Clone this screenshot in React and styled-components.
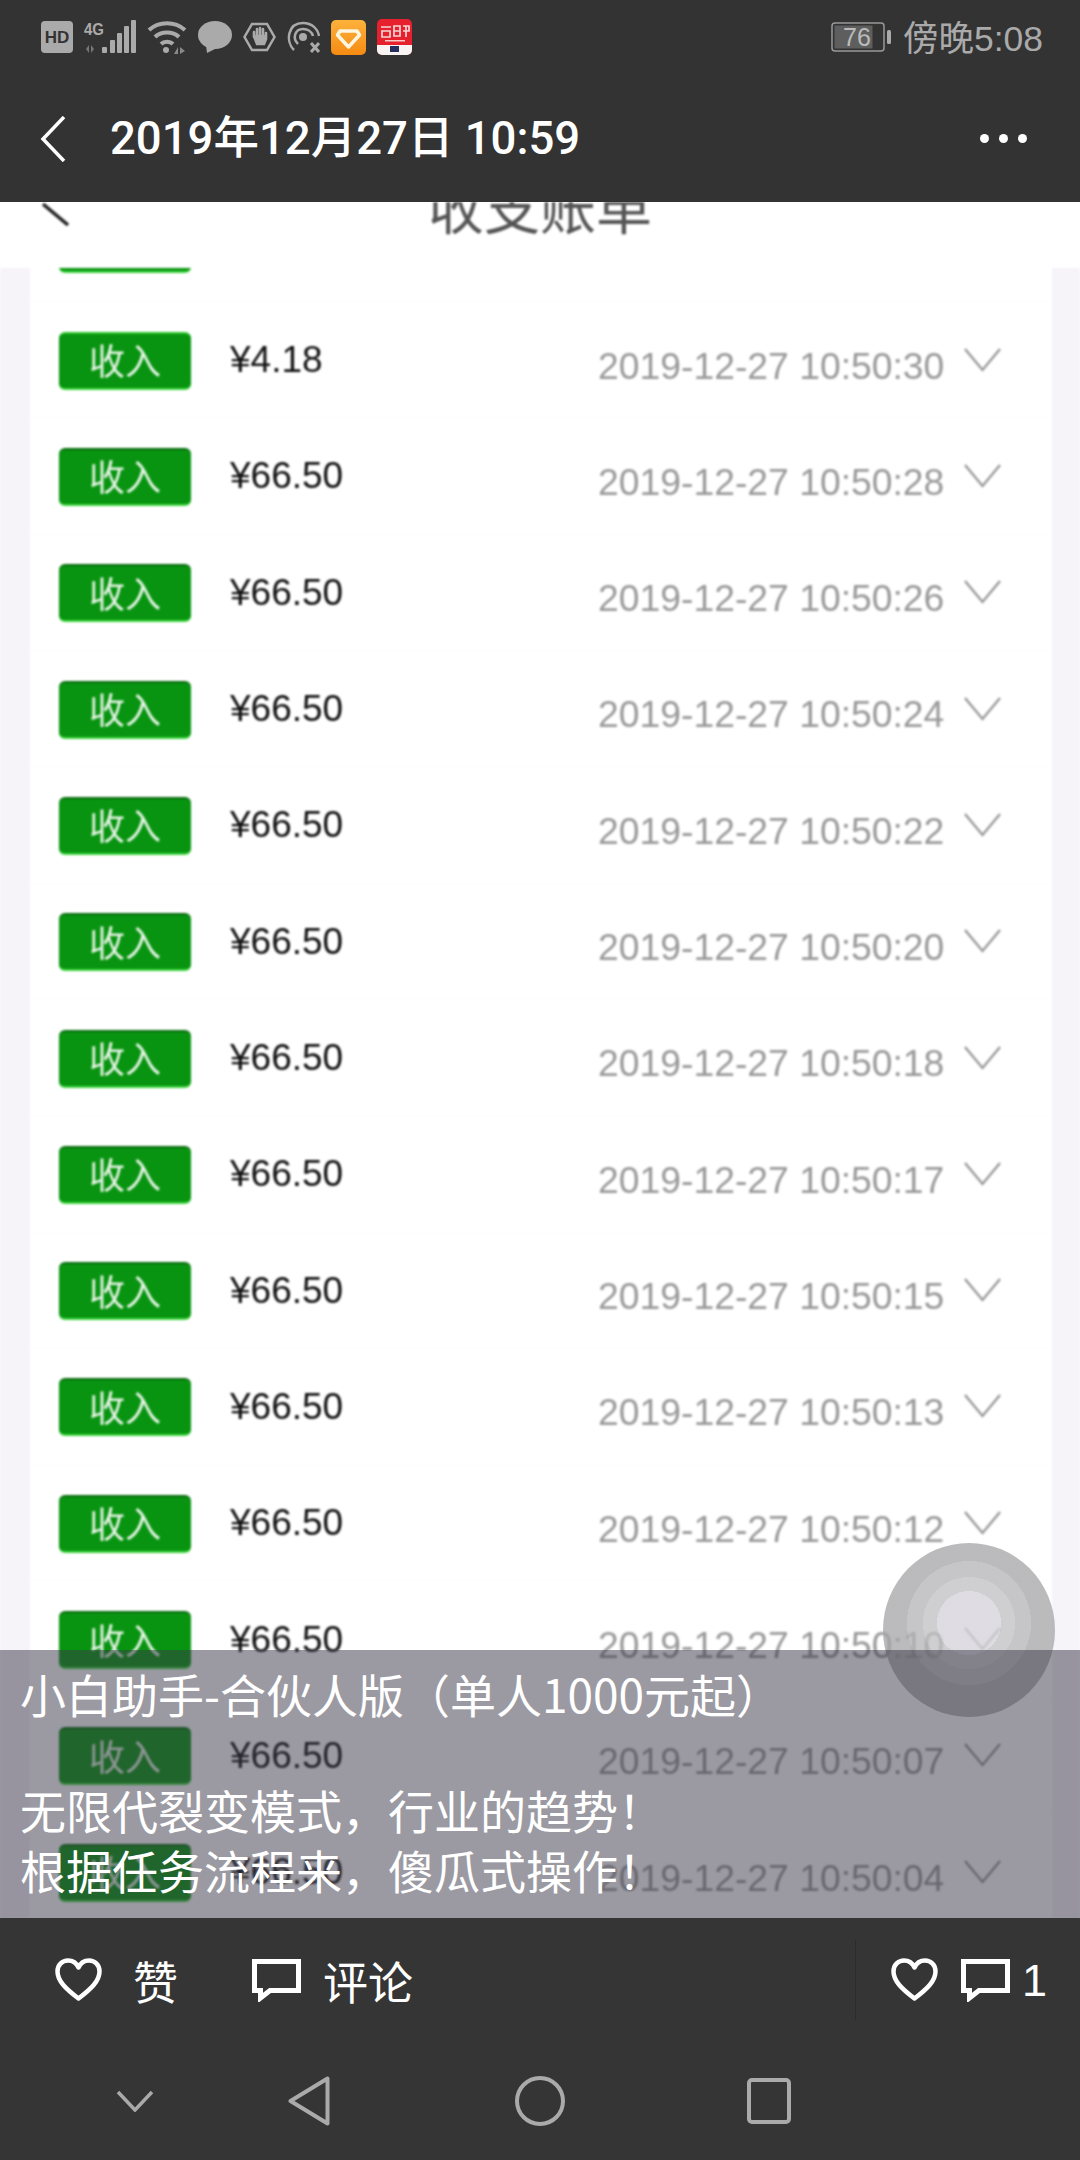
import React from "react";
import styled, { createGlobalStyle } from "styled-components";

const Global = createGlobalStyle`
  html, body { margin: 0; padding: 0; background: #333; }
  * { box-sizing: border-box; }
`;
const SANS = `"Liberation Sans", "Noto Sans CJK SC", sans-serif`;
const CJK = `"Noto Sans CJK SC", sans-serif`;

const Page = styled.div`
  width: 1080px; height: 2160px; display: flex; flex-direction: column;
  overflow: hidden; background: #333; font-family: ${SANS};
`;
const StatusBar = styled.div`
  height: 70px; display: flex; align-items: center; justify-content: space-between;
  padding: 4px 37px 0 41px; background: #333; color: #aaa;
`;
const StatusIcons = styled.div` display: flex; align-items: center; gap: 11px; `;
const StatusRight = styled.div` display: flex; align-items: center; gap: 10px; `;
const Clock = styled.span` font: 400 35.5px "Liberation Sans", ${CJK}; color: #aaa; margin-top: -4px; `;
const NavBar = styled.header`
  height: 132px; display: flex; align-items: center; padding: 5px 0 0 40px; background: #333;
`;
const NavTitle = styled.h1`
  margin: 0 0 0 44px; flex: 1; font: 500 45.500px/1 Roboto, ${CJK}; color: #fff;
`;
const Dots = styled.div` display: flex; gap: 10px; margin-right: 53px; `;
const Dot = styled.i` width: 9px; height: 9px; border-radius: 50%; background: #fff; `;

const Stage = styled.main`
  position: relative; flex: 1; overflow: hidden; background: #fff; display: flex; flex-direction: column;
`;
const Sheet = styled.div`
  flex: 1; display: flex; flex-direction: column; filter: blur(0.8px); min-height: 0;
`;
const PageHead = styled.div`
  height: 66px; flex: none; overflow: hidden; background: #fff; position: relative; z-index: 1;
  display: grid; grid-template-columns: 1fr auto 1fr; padding-left: 42px;
`;
const PageTitle = styled.div`
  margin-top: -25px; font: 400 56px/55px ${CJK}; color: #555; padding-right: 42px;
`;
const ListBack = styled.div`
  flex: 1; min-height: 0; background: #f6f3f9; padding: 0 28px 0 30px; overflow: hidden;
`;
const List = styled.div` background: #fff; margin-top: -82.3px; `;
const Row = styled.div`
  height: 116.32px; display: flex; align-items: center; padding: 0 32px 0 29px;
  border-bottom: 1px solid #fbfbfb;
`;
const Tag = styled.span`
  width: 132px; height: 58px; flex: none; display: flex; align-items: center; justify-content: center;
  margin-top: 2px; padding-bottom: 3px;
  background: #089410; border-radius: 6px; color: #e6f5e6;
  border-bottom: 2px solid #3ed63e; border-top: 2px solid ${p => (p.$first ? "#2fc52f" : "#0a6a10")};
  font: 400 36px/1 ${CJK};
`;
const Amount = styled.span` margin-left: 39px; width: 368px; font: 400 37px/1 ${SANS}; color: #111; `;
const Stamp = styled.span`
  margin-top: 13px; font: 400 37.300px/1 ${SANS}; color: #9a9a9a; white-space: nowrap; width: 366px; flex: none;
`;
const Ball = styled.div`
  position: absolute; left: 883px; top: 1341px; width: 172px; height: 174px; border-radius: 50%;
  background: radial-gradient(circle at 50% 46%, #d3d1d8 0 32px, #bfbfc2 32px 46px, #b3b3b5 46px 62px, #a4a4a6 62px);
  opacity: 0.75;
`;
const Overlay = styled.div`
  position: absolute; left: 0; right: 0; bottom: 0; height: 268px; padding: 13px 0 0 20px;
  background: rgba(55, 53, 70, 0.5); color: #fff; font: 400 46px/60px ${CJK};
`;
const AdLine = styled.div` margin-bottom: ${p => p.$gap || 0}px; white-space: nowrap; `;

const Bottom = styled.footer` height: 242px; flex: none; background: #353535; `;
const Actions = styled.div`
  height: 124px; display: flex; align-items: center; padding-left: 55px; color: #fff;
`;
const ActionLabel = styled.span`
  font: 400 45px/1 ${CJK}; color: #fff; margin-left: ${p => p.$ml || 0}px; margin-right: ${p => p.$mr || 0}px;
`;
const Divider = styled.span` width: 1px; height: 80px; background: #2b2b2b; margin-left: auto; margin-right: 35px; `;
const Count = styled.span` font: 400 45px/1 ${SANS}; color: #fff; margin: 0 33px 0 12px; `;
const IconGap = styled.span` width: ${p => p.$w}px; flex: none; `;
const SysNav = styled.nav`
  height: 118px; display: grid; grid-template-columns: 135px 174px 231px 229px;
`;
const SysSlot = styled.span` display: flex; align-items: center; justify-content: flex-end; width: 0; justify-self: end; `;
const Centered = styled.span` display: block; transform: translateX(50%); line-height: 0; margin-top: -1px; `;

const Heart = () => (
  <svg width="47" height="44" viewBox="0 0 47 44" fill="none" stroke="#fff" strokeWidth="4.5" strokeLinejoin="round">
    <path d="M23.5 40.5 C11 31 2.5 23 2.5 13.5 C2.5 6.5 7.5 2.5 13 2.5 C17.5 2.5 21.5 5 23.5 9.5 C25.5 5 29.5 2.5 34 2.5 C39.5 2.5 44.500 6.500 44.500 13.500 C44.500 23 36 31 23.500 40.500 Z" />
  </svg>
);
const Comment = () => (
  <svg width="49" height="43" viewBox="0 0 49 43" fill="none" stroke="#fff" strokeWidth="5" strokeLinejoin="miter">
    <path d="M2.500 2.500 H46.500 V31.500 H18 L8.500 39 V31.500 H2.500 Z" />
  </svg>
);
const Caret = () => (
  <svg width="37" height="24" viewBox="0 0 37 24" fill="none" stroke="#999" strokeWidth="2.400">
    <path d="M1 1 L18.500 22 L36 1" />
  </svg>
);

const Hd = () => (
  <svg width="32" height="32" viewBox="0 0 32 32">
    <rect width="32" height="32" rx="4" fill="#aaa" />
    <text x="16" y="22" textAnchor="middle" fontFamily="Liberation Sans" fontWeight="700" fontSize="17" fill="#333">HD</text>
  </svg>
);
const Signal = () => (
  <svg width="52" height="34" viewBox="0 0 52 34" fill="#aaa">
    <text x="0" y="14" fontFamily="Liberation Sans" fontWeight="700" fontSize="15" transform="scale(1 1.1)">4G</text>
    <path d="M2 29 l3-4 v8 z M7 25 l3 4 -3 4 z" fill="#777" />
    <rect x="18" y="27" width="5" height="6" rx="1" />
    <rect x="26" y="20" width="5" height="13" rx="1" />
    <rect x="33" y="13" width="5" height="20" rx="1" />
    <rect x="40" y="6" width="5" height="27" rx="1" />
    <rect x="47" y="0" width="5" height="33" rx="1" />
  </svg>
);
const Wifi = () => (
  <svg width="40" height="34" viewBox="0 0 40 34" fill="none" stroke="#aaa" strokeWidth="4">
    <path d="M2 10 C12 1 28 1 38 10" />
    <path d="M8 17 C14 11 26 11 32 17" />
    <path d="M14 24 C17 21 23 21 26 24" />
    <circle cx="19" cy="30" r="3" fill="#aaa" stroke="none" />
    <path d="M27 34 l4-7 v7 z M33 27 l5 4 -5 3 z" fill="#888" stroke="none" />
  </svg>
);
const Bubble = () => (
  <svg width="34" height="32" viewBox="0 0 34 32" fill="#aaa">
    <ellipse cx="17" cy="14" rx="17" ry="14" />
    <path d="M8 24 L9 32 L19 27 Z" />
  </svg>
);
const Hand = () => (
  <svg width="33" height="30" viewBox="0 0 33 30" fill="none" stroke="#aaa" strokeWidth="2.500">
    <path d="M9 2 H24 L31.500 15 L24 28 H9 L1.500 15 Z" />
    <path d="M11 15 V10 M14 15 V7 M17 15 V6 M20 15 V7 M23 17 V11 M11 14 L14 22 H21 L23 17" strokeWidth="2.600" strokeLinecap="round" />
    <path d="M12 13 H22 V20 L20 22 H14 Z" fill="#aaa" stroke="none" />
  </svg>
);
const Radar = () => (
  <svg width="33" height="32" viewBox="0 0 33 32" fill="none" stroke="#aaa" strokeWidth="2.500">
    <path d="M7 29 C-2 20 1 2 16 2 C25 2 31 8 32 15" />
    <path d="M11 23 C5 17 8 8 16 8 C21 8 25 11 26 15" />
    <circle cx="16" cy="16" r="4" fill="#aaa" stroke="none" />
    <path d="M24 22 L32 31 M32 22 L24 31" strokeWidth="3" />
  </svg>
);
const Gem = () => (
  <svg width="35" height="35" viewBox="0 0 35 35">
    <defs>
      <linearGradient id="gemfill" x1="0" y1="0" x2="0" y2="1">
        <stop offset="0" stopColor="#fdb23c" />
        <stop offset="1" stopColor="#f58a12" />
      </linearGradient>
    </defs>
    <rect width="35" height="35" rx="5" fill="url(#gemfill)" />
    <path d="M9 11 H26 L28.500 15 L17.500 27 L6.500 15 Z" fill="none" stroke="#fff5e0" strokeWidth="3.500" strokeLinejoin="round" />
  </svg>
);
const Pay = () => (
  <svg width="35" height="36" viewBox="0 0 35 36">
    <rect width="35" height="36" rx="5" fill="#e6202c" />
    <path d="M0 26 H35 V31 A5 5 0 0 1 30 36 H5 A5 5 0 0 1 0 31 Z" fill="#f8f4f4" />
    <rect x="13" y="27" width="9" height="6" fill="#26305e" />
    <path d="M4 8 H14 M5 12 H13 V18 H5 Z M17 7 H23 V17 H17 Z M17 12 H23 M26 7 H32 V12 H26 M29 7 V18" stroke="#f6d6d6" strokeWidth="1.700" fill="none" />
    <rect x="8" y="21" width="20" height="1.500" fill="#f6c8c8" />
  </svg>
);
const Battery = () => (
  <svg width="62" height="30" viewBox="0 0 62 30">
    <rect x="1" y="1" width="52" height="28" rx="3" fill="none" stroke="#999" strokeWidth="1.500" />
    <rect x="3.500" y="3.500" width="38" height="23" fill="#5e5e5e" />
    <rect x="56" y="8" width="4" height="14" rx="1.500" fill="#aaa" />
    <text x="26" y="24" textAnchor="middle" fontFamily="Liberation Sans" fontSize="25" fill="#bbb">76</text>
  </svg>
);
const BackArrow = () => (
  <svg width="26" height="46" viewBox="0 0 26 46" fill="none" stroke="#fff" strokeWidth="3.500">
    <path d="M24 1 L3 23 L24 45" />
  </svg>
);
const PageBack = () => (
  <svg width="30" height="24" viewBox="0 0 30 24" fill="none" stroke="#222" strokeWidth="3.500">
    <path d="M1 2 L26 23" />
  </svg>
);

const rows = [
  ["¥66.50", "10:50:32"], ["¥4.18", "10:50:30"], ["¥66.50", "10:50:28"], ["¥66.50", "10:50:26"],
  ["¥66.50", "10:50:24"], ["¥66.50", "10:50:22"], ["¥66.50", "10:50:20"], ["¥66.50", "10:50:18"],
  ["¥66.50", "10:50:17"], ["¥66.50", "10:50:15"], ["¥66.50", "10:50:13"], ["¥66.50", "10:50:12"],
  ["¥66.50", "10:50:10"], ["¥66.50", "10:50:07"], ["¥66.50", "10:50:04"],
];

export default function App() {
  return (
    <Page>
      <Global />
      <StatusBar>
        <StatusIcons>
          <Hd /><Signal /><Wifi /><Bubble /><Hand /><Radar /><Gem /><Pay />
        </StatusIcons>
        <StatusRight>
          <Battery />
          <Clock>傍晚5:08</Clock>
        </StatusRight>
      </StatusBar>
      <NavBar>
        <BackArrow />
        <NavTitle>2019年12月27日 10:59</NavTitle>
        <Dots><Dot /><Dot /><Dot /></Dots>
      </NavBar>
      <Stage>
        <Sheet>
          <PageHead>
            <div><PageBack /></div>
            <PageTitle>收支账单</PageTitle>
            <div />
          </PageHead>
          <ListBack>
            <List>
              {rows.map(([amount, time], i) => (
                <Row key={i}>
                  <Tag $first={i === 1}>收入</Tag>
                  <Amount>{amount}</Amount>
                  <Stamp>2019-12-27 {time}</Stamp>
                  <Caret />
                </Row>
              ))}
            </List>
          </ListBack>
        </Sheet>
        <Ball />
        <Overlay>
          <AdLine $gap={56}>小白助手-合伙人版（单人1000元起）</AdLine>
          <AdLine>无限代裂变模式，行业的趋势！</AdLine>
          <AdLine>根据任务流程来，傻瓜式操作！</AdLine>
        </Overlay>
      </Stage>
      <Bottom>
        <Actions>
          <Heart />
          <ActionLabel $ml={31} $mr={74}>赞</ActionLabel>
          <Comment />
          <ActionLabel $ml={22}>评论</ActionLabel>
          <Divider />
          <Heart />
          <IconGap $w={23} />
          <Comment />
          <Count>1</Count>
        </Actions>
        <SysNav>
          <SysSlot><Centered>
            <svg width="38" height="22" viewBox="0 0 38 22" fill="none" stroke="#aaa" strokeWidth="3.500"><path d="M2 2 L19 20 L36 2" /></svg>
          </Centered></SysSlot>
          <SysSlot><Centered>
            <svg width="42" height="50" viewBox="0 0 42 50" fill="none" stroke="#aaa" strokeWidth="4" strokeLinejoin="round"><path d="M39.500 2.500 V47.500 L2.500 25 Z" /></svg>
          </Centered></SysSlot>
          <SysSlot><Centered>
            <svg width="50" height="50" viewBox="0 0 50 50" fill="none" stroke="#aaa" strokeWidth="4"><circle cx="25" cy="25" r="23" /></svg>
          </Centered></SysSlot>
          <SysSlot><Centered>
            <svg width="44" height="46" viewBox="0 0 44 46" fill="none" stroke="#aaa" strokeWidth="4"><rect x="2" y="2" width="40" height="42" rx="3" /></svg>
          </Centered></SysSlot>
        </SysNav>
      </Bottom>
    </Page>
  );
}
